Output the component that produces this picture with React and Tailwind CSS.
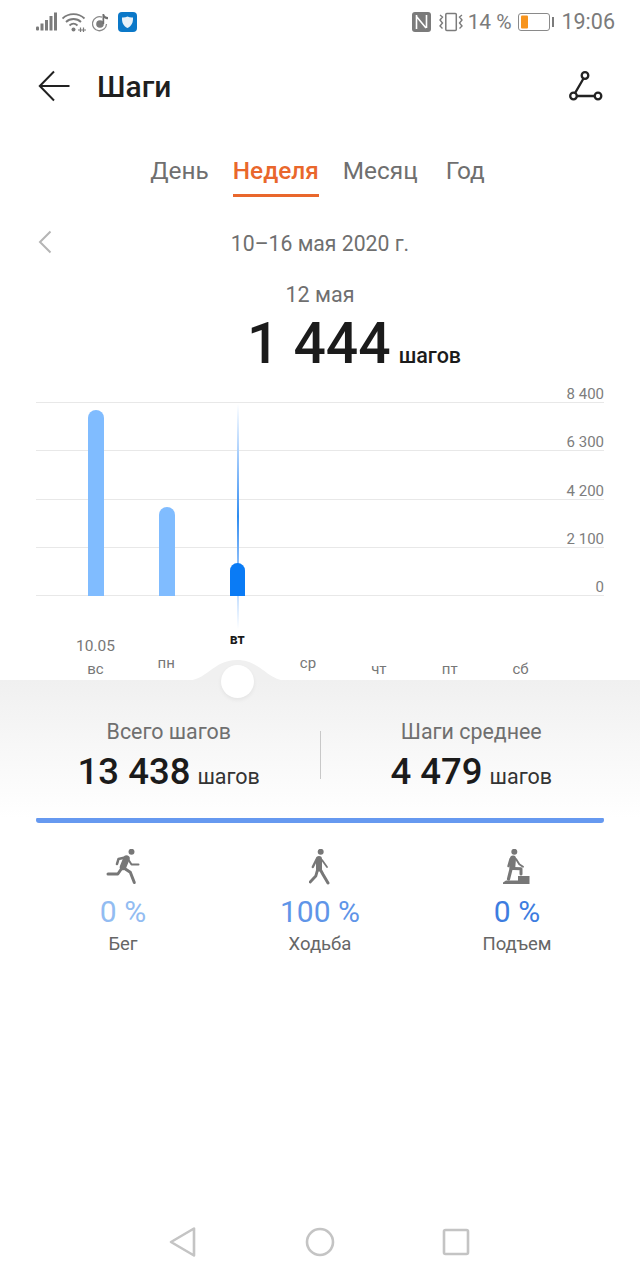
import React from "react";

const days = [
  { name: "вс", height: 186, top: 0, date: "10.05", color: "bg-[#80bcff]" },
  { name: "пн", height: 89, top: -6, color: "bg-[#80bcff]" },
  { name: "вт", height: 33, top: -30, active: true, color: "bg-[#0a7bf5]" },
  { name: "ср", height: 0, top: -6 },
  { name: "чт", height: 0, top: 0 },
  { name: "пт", height: 0, top: 0 },
  { name: "сб", height: 0, top: 0 },
];

const ticks = ["8 400", "6 300", "4 200", "2 100", "0"];

function StatusBar() {
  return (
    <div className="h-[44px] flex items-center justify-between pl-[36px] pr-[25px] text-[#7b7b7b]">
      <div className="flex items-center">
        <svg width="21" height="20" viewBox="0 0 21 20" fill="#7b7b7b">
          <rect x="0" y="14.500" width="3" height="4" rx="1" />
          <rect x="4.500" y="11.500" width="3" height="7" />
          <rect x="9" y="8" width="3" height="10.500" />
          <rect x="13.500" y="4" width="3" height="14.500" />
          <rect x="18" y="0.500" width="3" height="18" />
        </svg>
        <svg width="24" height="21" viewBox="0 0 24 21" fill="none" stroke="#7b7b7b" strokeWidth="1.800" className="ml-[5px]">
          <path d="M0.500 6.500C6.500 .6 16.500 .6 22.500 6.500" />
          <path d="M4 10C8 6 15 6 19 10" />
          <path d="M7.500 13.500C10 11.200 13 11.200 15.500 13.500" />
          <circle cx="11.500" cy="17.500" r="2" fill="#7b7b7b" stroke="none" />
          <path d="M16 18H24M18.500 15.500v4.500M21.500 15.500v4.500" strokeWidth="1.200" />
        </svg>
        <svg width="18" height="19" viewBox="0 0 18 19" fill="none" className="ml-[6px]">
          <path d="M10 4.200A7 7 0 1 0 14.500 11" stroke="#8a8a8a" strokeWidth="1.300" />
          <circle cx="8" cy="11" r="3.800" fill="#7b7b7b" />
          <path d="M10.500 11V1h1.600c.3 2 1.900 2.800 3.900 3v2.200c-1.500 0-2.800-.5-3.800-1.300V11z" fill="#6f6f6f" />
        </svg>
        <svg width="19" height="20" viewBox="0 0 19 20" className="ml-[8px]">
          <rect width="19" height="20" rx="4" fill="#0b78c8" />
          <path d="M4 5.500c2 .2 3.800-.1 5.500-1 1.700.9 3.500 1.200 5.500 1 .3 4.800-1.300 8.400-5.500 10.500C5.300 13.900 3.700 10.300 4 5.500z" fill="#e8f1f8" />
        </svg>
      </div>
      <div className="flex items-center leading-none">
        <svg width="19" height="20" viewBox="0 0 19 20">
          <rect width="19" height="20" rx="3" fill="#7b7b7b" />
          <path d="M4.500 17V3M4.500 4.500 14 16M14.500 3V16" fill="none" stroke="#fff" strokeWidth="1.600" />
        </svg>
        <svg width="24" height="20" viewBox="0 0 24 20" fill="none" stroke="#7b7b7b" className="ml-[8px]">
          <rect x="6.800" y="1.500" width="10.500" height="17" rx="1" strokeWidth="1.500" />
          <path d="M1 3l2.500 2L1 8l2.500 3L1 14l2.500 2.500M23 3l-2.500 2L23 8l-2.500 3L23 14l-2.500 2.500" strokeWidth="1.400" />
        </svg>
        <span className="ml-[5px] text-[21px] tracking-[-0.1px]">14 %</span>
        <svg width="36" height="18" viewBox="0 0 36 18" className="ml-[7px]">
          <rect x="0.500" y="0.500" width="31" height="17" rx="2.500" fill="none" stroke="#8a8a8a" />
          <rect x="3" y="2.500" width="7" height="13" rx="1" fill="#f7941d" />
          <rect x="34" y="4" width="2" height="10" fill="#7b7b7b" />
        </svg>
        <span className="ml-[7px] text-[21.500px]">19:06</span>
      </div>
    </div>
  );
}

function Chart() {
  return (
    <div className="relative mt-[-2px]">
      <div className="flex flex-col pl-[36px] pr-[36px] pt-[2px]">
        {ticks.map((t, i) => (
          <div key={t} className={`relative border-b border-[#e8e8e8] ${i === 0 ? "h-[16px]" : "h-[48.250px]"}`}>
            <span className="absolute right-0 bottom-[-1px] text-[15px] leading-[18px] text-[#7d7d7d]">{t}</span>
          </div>
        ))}
      </div>
      {/* столбики поверх сетки */}
      <div className="absolute left-[60.500px] top-[0px] w-[496px] grid grid-cols-7">
        {days.map((d) => (
          <div key={d.name} className="relative h-[211px] flex flex-col items-center justify-end">
            {d.active && (
              <div className="absolute left-1/2 -translate-x-1/2 top-[19px] h-[225px] w-[2px] bg-gradient-to-b from-[#ffffff] via-[#2b8cf0] to-[#ffffff]" />
            )}
            {d.height > 0 && <div className={`relative w-[15.500px] rounded-t-[8px] ${d.color}`} style={{ height: d.height }} />}
          </div>
        ))}
      </div>
      <div className="ml-[60px] w-[496px] grid grid-cols-7 mt-[32px] h-[52px] pb-[2px] text-center">
        {days.map((d) => (
          <div key={d.name} className="flex flex-col items-center justify-end" style={{ transform: `translateY(${d.top}px)` }}>
            {d.date && <span className="text-[15.500px] leading-[18px] text-[#777777] mb-[5px]">{d.date}</span>}
            <span className={d.active ? "text-[14px] leading-[18px] font-bold text-[#1a1a1a]" : "text-[15px] leading-[18px] text-[#777777]"}>{d.name}</span>
          </div>
        ))}
      </div>
    </div>
  );
}

function Stat({ label, value, className }) {
  return (
    <div className={`flex-1 flex flex-col items-center ${className}`}>
      <span className="text-[21.400px] leading-[24px] text-[#6f6f6f]">{label}</span>
      <div className="mt-[6px] leading-[44px] whitespace-nowrap text-[#1b1b1b]">
        <span className="text-[36.500px] font-medium">{value}</span>
        <span className="text-[21.500px] ml-[7px] text-[#333333]">шагов</span>
      </div>
    </div>
  );
}

function RunIcon() {
  return (
    <svg width="34" height="36" viewBox="0 0 34 36" fill="none" stroke="#777777" strokeLinejoin="round" strokeLinecap="round">
      <circle cx="25.500" cy="2.800" r="3" fill="#777777" stroke="none" />
      <path d="M20.500 9.500 17 18" strokeWidth="6.500" />
      <path d="M19 8.500 12.500 10 11 15" strokeWidth="2.600" />
      <path d="M22 10 25.500 15.500 32.500 15.500" strokeWidth="2" />
      <path d="M16 19 11.800 25 2 25" strokeWidth="3" />
      <path d="M17 18.500 24.300 23.300 28.300 33.500" strokeWidth="3" />
    </svg>
  );
}

function WalkIcon() {
  return (
    <svg width="22" height="36" viewBox="0 0 22 36" fill="none" stroke="#777777" strokeLinejoin="round" strokeLinecap="round">
      <circle cx="11.700" cy="2.800" r="3" fill="#777777" stroke="none" />
      <path d="M10 10 10 19.500" strokeWidth="6" />
      <path d="M8 9.500 3.800 18" strokeWidth="2.400" />
      <path d="M13 11 18 18" strokeWidth="1.800" />
      <path d="M11 20 14 25.500 19 34" strokeWidth="3" />
      <path d="M8.500 21 6.800 27 1.200 33" strokeWidth="2.800" />
    </svg>
  );
}

function ClimbIcon() {
  return (
    <svg width="28" height="36" viewBox="0 0 28 36" fill="none" stroke="#777777" strokeLinejoin="round" strokeLinecap="round">
      <circle cx="11.300" cy="2.800" r="3" fill="#777777" stroke="none" />
      <path d="M10 9.500 9.300 18" strokeWidth="6" />
      <path d="M7.500 10 5.500 17" strokeWidth="2.400" />
      <path d="M13 10 16.300 15.300 20 17.700" strokeWidth="1.900" />
      <path d="M10.500 19.500 18 19.800 18 25" strokeWidth="3" />
      <path d="M8 20 5.500 30" strokeWidth="3.200" />
      <path d="M0 35V33.500L3 31.500H15V27H26.500V35Z" fill="#777777" stroke="none" />
    </svg>
  );
}

function Activity({ icon, value, label, color }) {
  return (
    <div className="flex flex-col items-center w-[120px]">
      <div className="h-[36px] flex items-end">{icon}</div>
      <span className={`mt-[9px] text-[30px] leading-[36px] ${color}`}>{value}</span>
      <span className="mt-[2px] text-[18.500px] leading-[24px] text-[#666666]">{label}</span>
    </div>
  );
}

export default function App() {
  return (
    <div className="w-[640px] h-[1280px] bg-white flex flex-col font-['Roboto',sans-serif] overflow-hidden">
      <StatusBar />

      <div className="h-[84px] flex items-center justify-between pl-[38px] pr-[37px]">
        <div className="flex items-center gap-[27px]">
          <svg width="32" height="32" viewBox="0 0 32 32" fill="none" stroke="#222222" strokeWidth="2">
            <path d="M16 1.500 1.800 16 16 30.500M2 16h29.500" />
          </svg>
          <span className="text-[30px] font-medium text-[#1f1f1f]">Шаги</span>
        </div>
        <svg width="34" height="30" viewBox="0 0 34 30" fill="none" stroke="#222222" strokeWidth="2.300">
          <circle cx="16" cy="4.500" r="3.300" />
          <circle cx="4.500" cy="25" r="3.300" />
          <circle cx="29" cy="25" r="3.300" />
          <path d="M14.500 7.500 6 22.200M8 25h17.500" />
        </svg>
      </div>

      <div className="mt-[20px] flex justify-center gap-[24px] text-[24.400px] leading-[46px] text-[#6f6f6f] pr-[5px]">
        <span>День</span>
        <span className="font-medium text-[#e9672c] border-b-[3px] border-[#e9672c] h-[49px]">Неделя</span>
        <span>Месяц</span>
        <span className="ml-[4px]">Год</span>
      </div>

      <div className="relative mt-[22px] h-[50px] flex items-center justify-center">
        <svg width="14" height="24" viewBox="0 0 14 24" fill="none" stroke="#b5b5b5" strokeWidth="2" className="absolute left-[38px] top-[11px]">
          <path d="M12.500 1.500 2 12l10.500 10.500" />
        </svg>
        <span className="text-[21.200px] text-[#6f6f6f]">10–16 мая 2020 г.</span>
      </div>

      <div className="mt-[13px] text-center text-[21.500px] leading-[26px] text-[#6f6f6f]">12 мая</div>
      <div className="mt-[5px] flex justify-center items-baseline leading-[62px] text-[#1b1b1b] pl-[68px]">
        <span className="text-[57px] font-medium">1 444</span>
        <span className="text-[21.500px] font-medium ml-[8px]">шагов</span>
      </div>

      <Chart />

      <div className="relative h-[138px] bg-gradient-to-b from-[#f0f0f0] to-[#ffffff]">
        <svg width="104" height="21" viewBox="0 0 104 21" fill="#f0f0f0" className="absolute left-[185px] top-[-20px]">
          <path d="M0 21C22 21 28 0 52 0s30 21 52 21z" />
        </svg>
        <div className="absolute left-[221px] top-[-15px] w-[33px] h-[33px] rounded-full bg-white shadow-[0_2px_4px_rgba(0,0,0,0.06)]" />
        <div className="flex items-start pt-[40px]">
          <Stat label="Всего шагов" value="13 438" className="pl-[18px]" />
          <div className="w-px h-[48px] bg-[#c8c8c8] mt-[11px]" />
          <Stat label="Шаги среднее" value="4 479" className="pr-[18px]" />
        </div>
      </div>

      <div className="mx-[36px] h-[6px] rounded-full bg-[#6699f0] mt-[-1px]" />

      <div className="mt-[26px] px-[63px] flex justify-between">
        <Activity icon={<RunIcon />} value="0 %" label="Бег" color="text-[#92bcf2]" />
        <Activity icon={<WalkIcon />} value="100 %" label="Ходьба" color="text-[#5f95e8]" />
        <Activity icon={<ClimbIcon />} value="0 %" label="Подъем" color="text-[#3d7de0]" />
      </div>

      <div className="mt-auto mb-[22px] flex justify-center items-center gap-[107.500px] pr-[1px]">
        <svg width="28" height="32" viewBox="0 0 28 32" fill="none" stroke="#c4c4c4" strokeWidth="2.600" strokeLinejoin="round">
          <path d="M25 2.500v27L2 16z" />
        </svg>
        <svg width="30" height="30" viewBox="0 0 30 30" fill="none" stroke="#c4c4c4" strokeWidth="2.600">
          <circle cx="15" cy="15" r="13" />
        </svg>
        <svg width="28" height="28" viewBox="0 0 28 28" fill="none" stroke="#c4c4c4" strokeWidth="2.600" strokeLinejoin="round">
          <rect x="2" y="2" width="24" height="24" rx="1.500" />
        </svg>
      </div>
    </div>
  );
}
